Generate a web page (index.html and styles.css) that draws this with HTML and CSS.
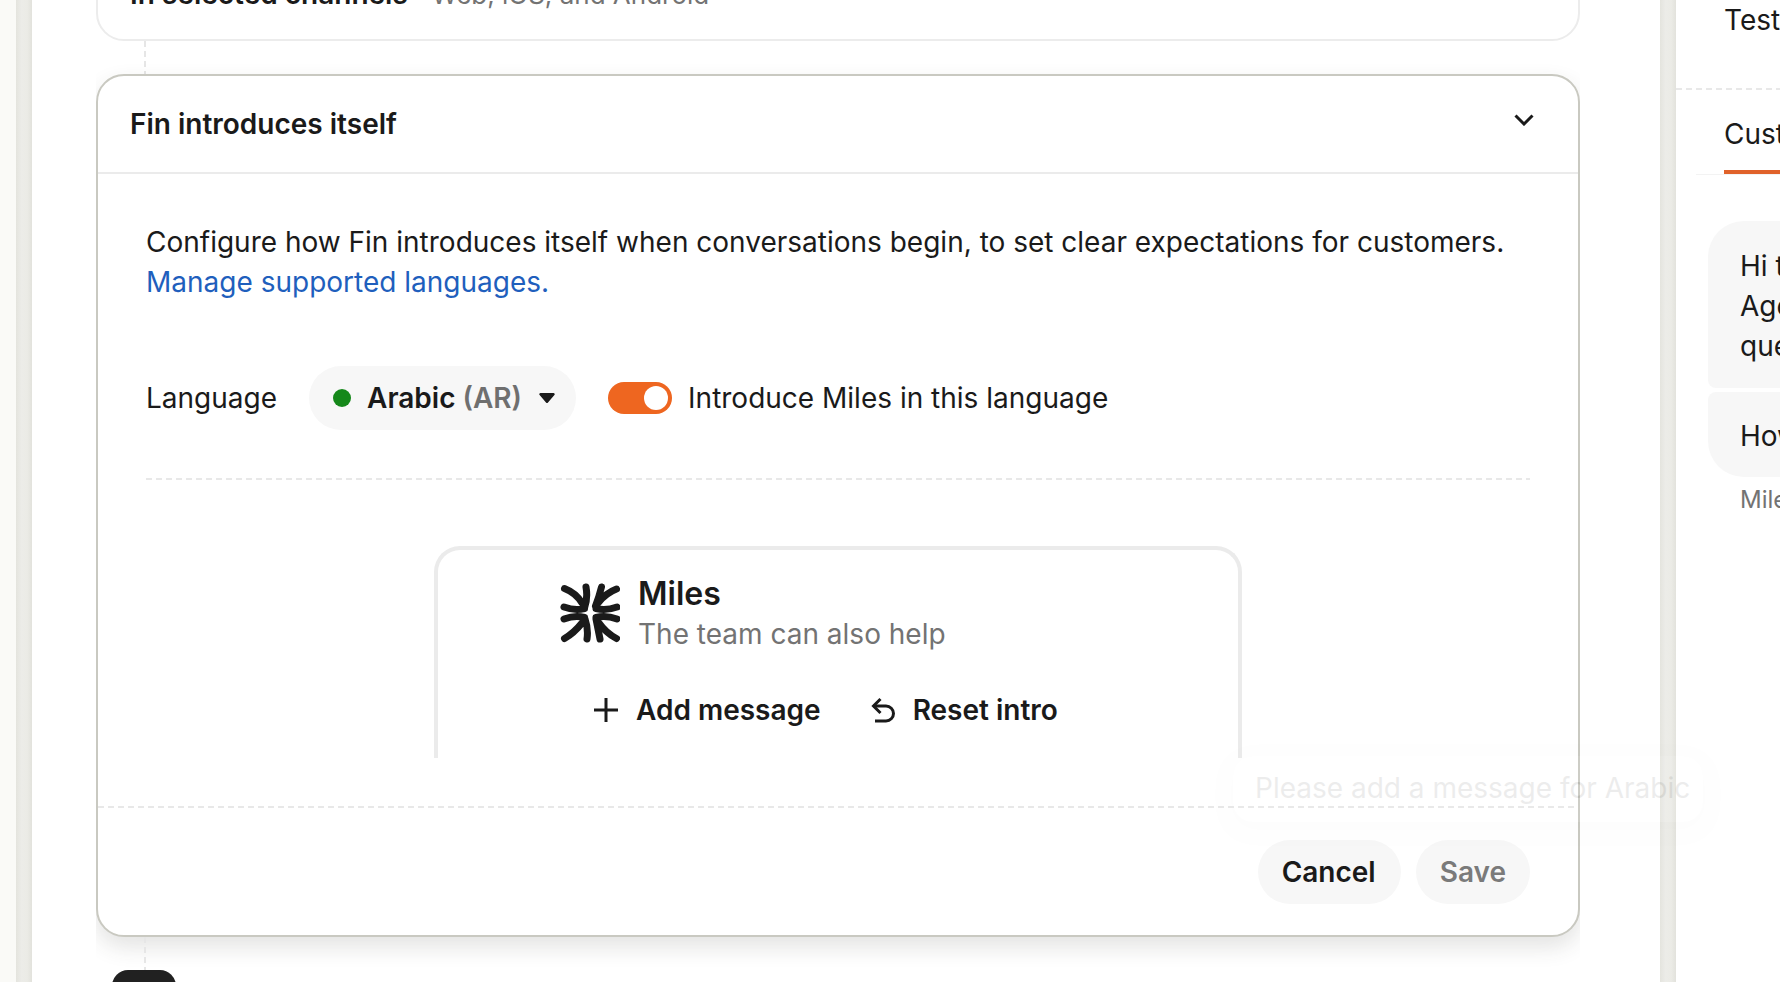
FILE: index.html
```html
<!DOCTYPE html>
<html lang="en">
<head>
<meta charset="utf-8">
<title>Fin introduces itself</title>
<link rel="stylesheet" href="styles.css">
</head>
<body>
<div class="rail"></div>
<div class="strip"></div>
<main class="main">
  <section class="card card-closed">
    <div class="card-head">
      <div class="head-text"><span>In selected channels</span><span class="head-sub">Web, iOS, and Android</span></div>
      <svg class="chevron" viewBox="0 0 20 12" aria-hidden="true"><path d="M1.500 1.500 10 10l8.500-8.500"/></svg>
    </div>
  </section>
  <div class="connector connector-top"></div>
  <div class="shadow-clip">
    <section class="card card-open">
      <div class="card-head card-head-open">
        <div class="head-text"><span>Fin introduces itself</span></div>
        <svg class="chevron" viewBox="0 0 20 12" aria-hidden="true"><path d="M1.500 1.500 10 10l8.500-8.500"/></svg>
      </div>
      <div class="card-body">
        <p class="intro">Configure how Fin introduces itself when conversations begin, to set clear expectations for customers. <a class="link" href="#">Manage supported languages.</a></p>
        <div class="lang-row">
          <span class="lang-label">Language</span>
          <button class="pill" type="button">
            <span class="dot"></span>
            <span class="lang-name">Arabic <span class="lang-code">(AR)</span></span>
            <svg class="caret" viewBox="0 0 16 10" aria-hidden="true"><path d="M1.500 0h13a1.200 1.200 0 0 1 .9 2L9 9.400a1.300 1.300 0 0 1-2 0L.6 2a1.200 1.200 0 0 1 .9-2z"/></svg>
          </button>
          <span class="toggle"><span class="knob"></span></span>
          <span class="toggle-label">Introduce Miles in this language</span>
        </div>
        <div class="dash dash-inner"></div>
        <div class="preview">
          <div class="preview-head">
            <svg class="logo" viewBox="0 0 60 60" aria-hidden="true">
              <path d="M4.500 5.500Q16 10 22 20M26 4Q28 15 24.500 25M4 24Q15 28 24.500 25.500"/>
              <path d="M41.500 4Q39 14 35.500 23M56.500 6Q46 10 38 20M57 24Q46 28 36 25.500"/>
              <path d="M4 36Q15 32 24.500 34.500M4.500 55.500Q14 50 22 40M27 56Q28.500 46 25 36"/>
              <path d="M57 36Q46 32 36 34.500M56.500 55.500Q46 50 39 40M40 56Q38 46 36 36"/>
            </svg>
            <div>
              <div class="agent-name">Miles</div>
              <div class="agent-sub">The team can also help</div>
            </div>
          </div>
          <div class="preview-actions">
            <button class="text-btn" type="button">
              <svg class="btn-icon" viewBox="0 0 24 24" aria-hidden="true"><path d="M12 0v24M0 12h24"/></svg>Add message
            </button>
            <button class="text-btn" type="button">
              <svg class="btn-icon" viewBox="0 0 24 24" aria-hidden="true"><path d="M9.500 1 2.500 8l7 7"/><path d="M2.500 8H15a7.500 7.500 0 0 1 0 15H4"/></svg>Reset intro
            </button>
          </div>
        </div>
      </div>
      <div class="dash"></div>
      <div class="card-foot">
        <button class="foot-btn foot-btn-cancel" type="button">Cancel</button>
        <button class="foot-btn foot-btn-muted" type="button">Save</button>
      </div>
    </section>
  </div>
  <div class="connector"></div>
  <div class="next-node"></div>
</main>
<div class="strip"></div>
<aside class="side">
  <div class="side-title">Test</div>
  <div class="dash"></div>
  <div class="tabs"><span class="tab">Customer</span></div>
  <div class="bubble bubble-first">Hi there, I'm<br>Agent. Ask me<br>questions</div>
  <div class="bubble bubble-last">How can I help?</div>
  <div class="bubble-meta">Miles · AI Agent</div>
</aside>
<div class="toast">Please add a message for Arabic</div>
</body>
</html>
```
FILE: styles.css
```css
* { box-sizing: border-box; }
html, body { margin: 0; padding: 0; }
body {
  position: relative;
  display: flex;
  width: 1780px;
  height: 982px;
  overflow: hidden;
  background: #fff;
  color: #1a1a1a;
  font-family: Inter, "Liberation Sans", sans-serif;
  font-size: 28px;
  line-height: 40px;
}
button { font: inherit; color: inherit; border: 0; background: none; padding: 0; }
.rail { flex: 0 0 16px; background: #fafaf7; }
.strip {
  flex: 0 0 16px;
  background: linear-gradient(90deg, #e4e4de 0, #ecece8 35%, #ebebe6 70%, #e2e2dc 100%);
}
.main {
  flex: 0 0 1628px;
  padding: 0 80px 0 64px;
  overflow: hidden;
}
.card { background: #fff; border-radius: 28px; }
.card-closed {
  height: 94px;
  margin-top: -53px;
  border: 2px solid #ececec;
}
.card-open { border: 2px solid #c9c9c1; }
.shadow-clip { overflow-x: clip; overflow-y: visible; }
.card-open { box-shadow: 0 10px 22px rgba(60, 60, 50, .14); }
.card-head {
  display: flex;
  align-items: center;
  justify-content: space-between;
  height: 90px;
  padding: 0 44px 0 32px;
}
.card-head-open { height: 98px; border-bottom: 2px solid #ebebeb; }
.head-text { font-weight: 600; }
.head-sub { margin-left: 24px; font-size: 26px; font-weight: 400; color: #737373; }
.chevron {
  width: 20px;
  height: 12px;
  margin-top: -8px;
  fill: none;
  stroke: #1a1a1a;
  stroke-width: 3;
}
.connector {
  width: 2px;
  height: 33px;
  margin-left: 48px;
  background: repeating-linear-gradient(180deg, #e6e6e6 0 6px, transparent 6px 10px);
}
.next-node {
  width: 64px;
  height: 40px;
  margin-left: 16px;
  border-radius: 16px;
  background: #212121;
}
.card-body { padding: 48px 48px 48px; }
.intro { margin: 0; }
.link { color: #1f5fbd; text-decoration: none; display: block; }
.lang-row { display: flex; align-items: center; margin-top: 64px; }
.lang-label { margin-right: 32px; }
.pill {
  display: flex;
  align-items: center;
  height: 64px;
  padding: 0 21px 0 24px;
  border-radius: 32px;
  background: #f7f7f7;
}
.dot {
  width: 18px;
  height: 18px;
  margin-right: 16px;
  border-radius: 50%;
  background: #15881a;
}
.lang-name { font-weight: 600; }
.lang-code { color: #6f6f6f; }
.caret { width: 16px; height: 10px; margin-left: 17px; fill: #1a1a1a; }
.toggle {
  display: flex;
  justify-content: flex-end;
  align-items: center;
  width: 64px;
  height: 32px;
  margin: 0 16px 0 32px;
  padding-right: 4px;
  border-radius: 16px;
  background: #ee6620;
}
.knob { width: 24px; height: 24px; border-radius: 50%; background: #fff; }
.dash {
  height: 2px;
  background: repeating-linear-gradient(90deg, #e8e8e8 0 6px, transparent 6px 10px);
}
.dash-inner { margin-top: 48px; }
.preview {
  width: 808px;
  height: 212px;
  margin: 66px auto 0;
  padding: 24px 0 0 122px;
  border: 4px solid #ebebeb;
  border-bottom: 0;
  border-radius: 26px 26px 0 0;
}
.preview-head { display: flex; align-items: flex-start; gap: 18px; }
.logo { flex: none; width: 60px; height: 60px; margin-top: 9px; fill: none; stroke: #1a1a1a; stroke-width: 7; stroke-linecap: round; }
.agent-name { font-size: 32px; font-weight: 600; }
.agent-sub { color: #737373; }
.preview-actions { display: flex; gap: 50px; margin: 36px 0 0 34px; }
.text-btn { display: flex; align-items: center; gap: 18px; font-weight: 600; }
.btn-icon { width: 24px; height: 24px; fill: none; stroke: #1a1a1a; stroke-width: 3; overflow: visible; }
.card-foot { display: flex; justify-content: flex-end; gap: 15px; padding: 32px 48px 31px; }
.foot-btn {
  height: 64px;
  padding: 0 24px;
  border-radius: 32px;
  background: #f7f7f7;
  font-weight: 600;
}
.foot-btn-cancel { padding-right: 25px; }
.foot-btn-muted { color: #7a7a7a; }
.side { flex: 1; min-width: 0; overflow: hidden; white-space: nowrap; }
.side-title { height: 88px; padding-left: 48px; }
.tabs { height: 85px; margin-left: 20px; padding: 24px 0 0 28px; border-bottom: 1px solid #f3f3f3; }
.tab { display: block; height: 60px; border-bottom: 4px solid #e0622a; }
.bubble { margin-left: 32px; padding: 25px 0 0 32px; background: #f7f7f7; }
.bubble-first { height: 167px; margin-top: 46px; border-radius: 36px 0 0 8px; }
.bubble-last { height: 85px; margin-top: 4px; padding-top: 24px; border-radius: 8px 0 0 36px; }
.bubble-meta { margin: 3px 0 0 64px; font-size: 24px; color: #737373; }
.toast {
  position: absolute;
  left: 1233px;
  top: 756px;
  width: 470px;
  height: 66px;
  padding: 12px 22px;
  border-radius: 20px;
  background: #fff;
  box-shadow: 0 6px 20px rgba(0, 0, 0, .12);
  white-space: nowrap;
  opacity: .08;
}
```
